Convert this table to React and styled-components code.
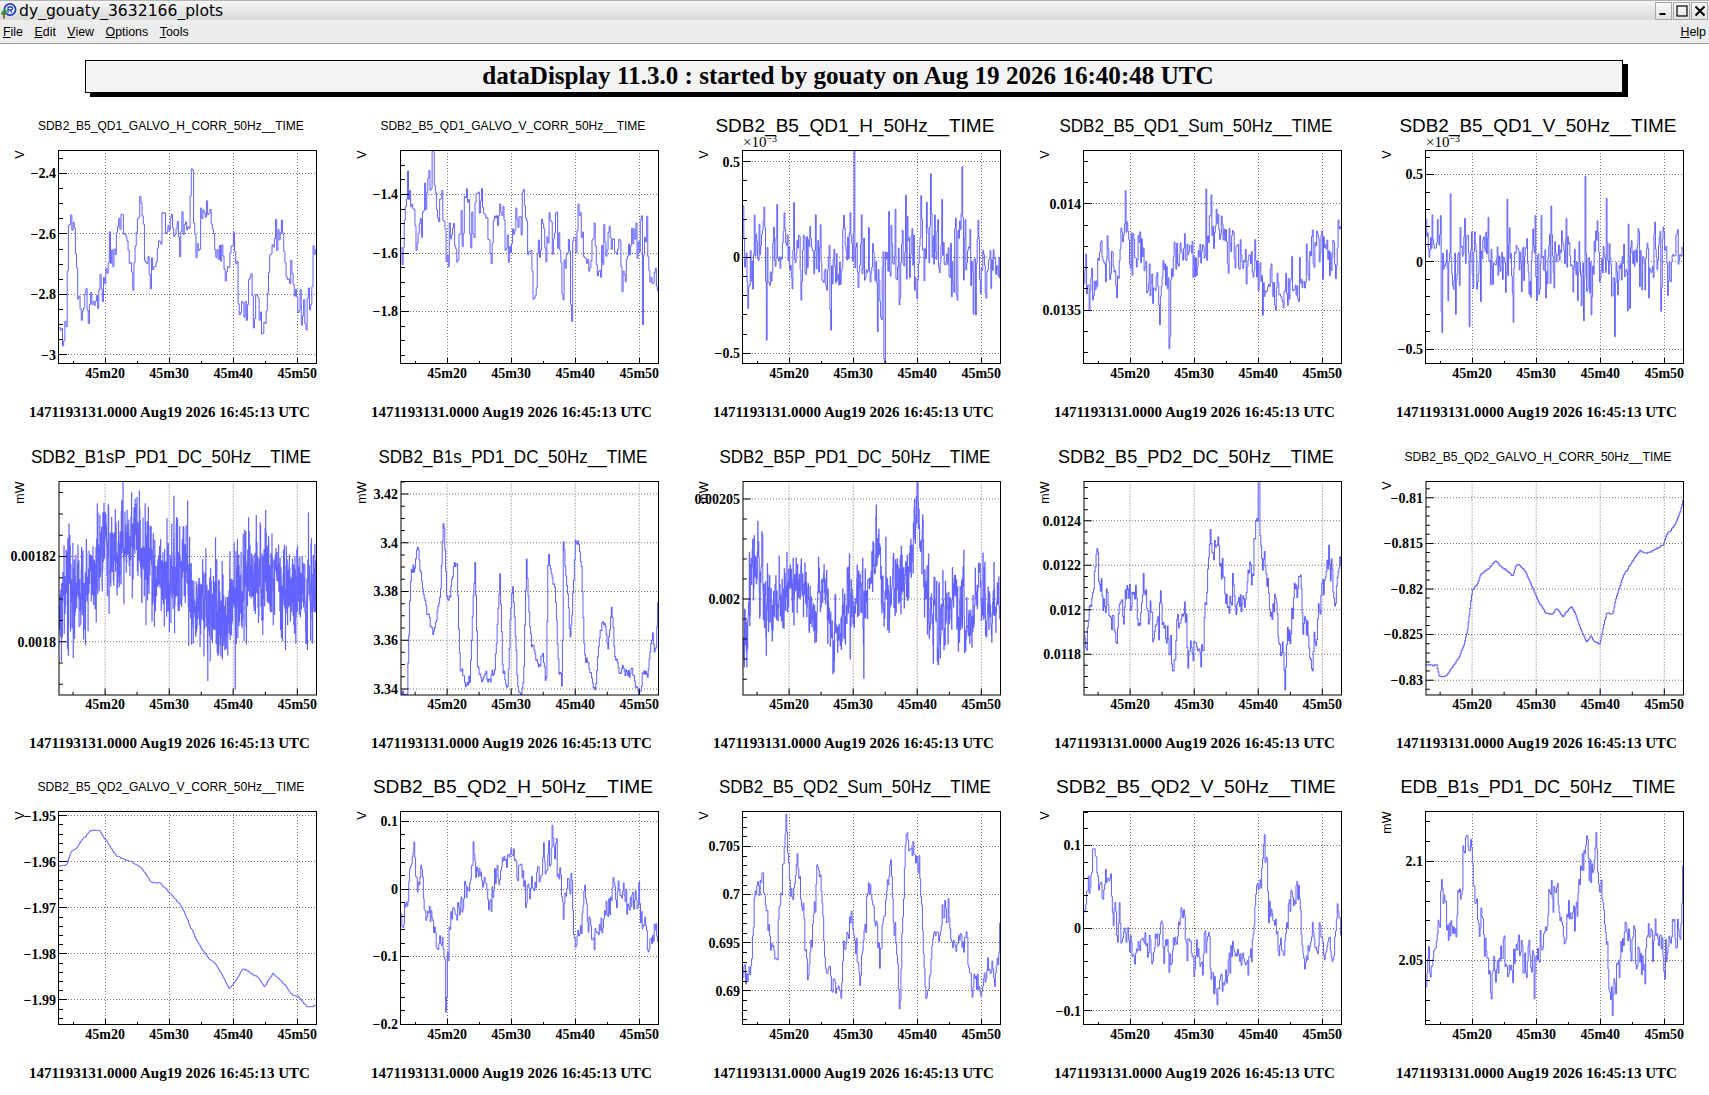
import React, { useMemo } from "react";
import styled, { createGlobalStyle } from "styled-components";

const GlobalStyle = createGlobalStyle`
  html, body {
    margin: 0;
    padding: 0;
    background: #ffffff;
    overflow: hidden;
  }
  #root {
    height: 100vh;
  }
`;

// pad geometry (one pad = 1/5 of the canvas width, 1/3 of the plot area)
const PW = 341.8;
const PH = 330.67;
const FL = 59;
const FR = 316.5;
const FT = 47.5;
const FB = 261;
const T0 = 12.8;
const T1 = 53.0;

const STAMP = "1471193131.0000 Aug19 2026 16:45:13 UTC";

function mulberry32(a) {
  return function () {
    a |= 0;
    a = (a + 0x6d2b79f5) | 0;
    let t = Math.imul(a ^ (a >>> 15), 1 | a);
    t = (t + Math.imul(t ^ (t >>> 7), 61 | t)) ^ t;
    return ((t ^ (t >>> 14)) >>> 0) / 4294967296;
  };
}

function gauss(rng) {
  let u = 0;
  while (u === 0) u = rng();
  const v = rng();
  return Math.sqrt(-2 * Math.log(u)) * Math.cos(2 * Math.PI * v);
}

function interp(keys, t) {
  if (t <= keys[0]) return keys[1];
  for (let i = 0; i < keys.length - 2; i += 2) {
    const ta = keys[i];
    const tb = keys[i + 2];
    if (t >= ta && t <= tb) {
      const f = (t - ta) / (tb - ta);
      return keys[i + 1] + f * (keys[i + 3] - keys[i + 1]);
    }
  }
  return keys[keys.length - 1];
}

function makeSeries({ seed, n, keys, sd, phi = 0.5, spikeRate = 0, spikeAmp = 0, spikes = [] }) {
  const rng = mulberry32(seed);
  const out = [];
  let ar = 0;
  for (let i = 0; i < n; i++) {
    const t = T0 + ((i + 0.5) / n) * (T1 - T0);
    ar = phi * ar + sd * gauss(rng);
    let v = interp(keys, t) + ar;
    if (spikeRate && rng() < spikeRate) {
      v += (rng() < 0.5 ? -1 : 1) * spikeAmp * (0.4 + 0.6 * rng());
    }
    spikes.forEach(([ts, amp, w]) => {
      if (Math.abs(t - ts) < w) v += amp;
    });
    out.push(v);
  }
  return out;
}

const PLOTS = [
  {
    title: "SDB2_B5_QD1_GALVO_H_CORR_50Hz__TIME", small: true, tw: 266, unit: "V",
    ymin: -3.03, ymax: -2.324, majors: [-3, -2.8, -2.6, -2.4], minor: 0.05,
    data: {
      seed: 11, n: 220, sd: 0.035, phi: 0.45,
      keys: [13, -2.87, 14, -2.88, 14.4, -2.52, 15.4, -2.6, 15.8, -2.86, 17, -2.85, 18.5, -2.8, 19.5, -2.78, 20.3, -2.75, 20.6, -2.62, 21.2, -2.72, 21.7, -2.65, 22.2, -2.5, 22.8, -2.56, 23.5, -2.6, 24.3, -2.72, 25, -2.62, 25.7, -2.47, 26.2, -2.72, 27.5, -2.74, 28.3, -2.62, 29.5, -2.58, 30.5, -2.6, 31.5, -2.57, 32.3, -2.52, 33, -2.58, 33.6, -2.43, 34.3, -2.76, 35, -2.55, 35.9, -2.45, 36.8, -2.6, 37.8, -2.68, 39, -2.74, 40.1, -2.64, 40.8, -2.85, 42, -2.86, 42.6, -2.72, 43.3, -2.86, 44.5, -2.9, 45.2, -2.93, 45.8, -2.74, 46.8, -2.66, 47.8, -2.64, 48.6, -2.72, 49.5, -2.7, 50.2, -2.86, 51.5, -2.88, 52.2, -2.83, 52.6, -2.62, 53, -2.6],
    },
  },
  {
    title: "SDB2_B5_QD1_GALVO_V_CORR_50Hz__TIME", small: true, tw: 265, unit: "V",
    ymin: -1.979, ymax: -1.249, majors: [-1.8, -1.6, -1.4], minor: 0.05,
    data: {
      seed: 23, n: 240, sd: 0.05, phi: 0.4,
      spikes: [[39.4, -0.25, 0.12], [50.6, -0.22, 0.12], [17.8, 0.08, 0.2]],
      keys: [13, -1.68, 13.7, -1.45, 14.5, -1.42, 15.5, -1.55, 16.5, -1.42, 17.6, -1.34, 18.4, -1.5, 19.3, -1.44, 20.2, -1.6, 21, -1.52, 22, -1.62, 23, -1.42, 24, -1.55, 24.8, -1.36, 25.8, -1.48, 26.8, -1.6, 27.8, -1.55, 28.8, -1.45, 29.8, -1.58, 30.8, -1.52, 31.8, -1.42, 32.8, -1.58, 33.8, -1.66, 34.8, -1.52, 35.8, -1.58, 36.8, -1.5, 37.8, -1.62, 38.8, -1.55, 39.8, -1.62, 40.8, -1.47, 41.8, -1.6, 42.8, -1.5, 43.8, -1.62, 44.8, -1.55, 45.8, -1.5, 46.8, -1.6, 47.8, -1.68, 48.8, -1.55, 49.8, -1.6, 50.8, -1.65, 51.8, -1.72, 53, -1.7],
    },
  },
  {
    title: "SDB2_B5_QD1_H_50Hz__TIME", tw: 279, unit: "V", exp: "\u22123",
    ymin: -0.556, ymax: 0.559, majors: [-0.5, 0, 0.5], minor: 0.1,
    data: {
      seed: 37, n: 320, sd: 0.1, phi: 0.45, spikeRate: 0.1, spikeAmp: 0.3,
      spikes: [[16.5, -0.32, 0.08], [34.9, -0.38, 0.08], [20.7, 0.38, 0.08], [30.2, 0.34, 0.08], [26.5, -0.3, 0.08]],
      keys: [13, 0, 53, 0],
    },
  },
  {
    title: "SDB2_B5_QD1_Sum_50Hz__TIME", tw: 273, unit: "V",
    ymin: 0.013247, ymax: 0.014251, majors: [0.0135, 0.014], minor: 0.0001,
    data: {
      seed: 41, n: 300, sd: 0.00006, phi: 0.3, spikeRate: 0.06, spikeAmp: 0.00015,
      spikes: [[26.2, -0.0003, 0.08], [31.9, 0.00025, 0.08]],
      keys: [13, 0.013659, 14, 0.013549, 15.4, 0.013753, 16.8, 0.013706, 18.2, 0.013675, 19.2, 0.013895, 20.6, 0.013832, 21.9, 0.013753, 23.3, 0.013643, 25, 0.01358, 26.4, 0.013706, 28.1, 0.013753, 29.8, 0.013737, 31.6, 0.013769, 32.6, 0.013958, 34, 0.013863, 35.7, 0.013769, 37.4, 0.013753, 39.1, 0.01369, 40.8, 0.013643, 42.6, 0.013612, 44.3, 0.01358, 46, 0.013659, 48.1, 0.013706, 49.8, 0.013785, 51.5, 0.013737, 52.9, 0.013832],
    },
  },
  {
    title: "SDB2_B5_QD1_V_50Hz__TIME", tw: 277, unit: "V", exp: "\u22123",
    ymin: -0.584, ymax: 0.638, majors: [-0.5, 0, 0.5], minor: 0.1,
    data: {
      seed: 53, n: 340, sd: 0.09, phi: 0.4, spikeRate: 0.1, spikeAmp: 0.3,
      spikes: [[15.3, -0.42, 0.08], [25.5, 0.42, 0.08], [37.7, 0.47, 0.08], [38.4, -0.4, 0.08]],
      keys: [13, 0.02, 53, 0],
    },
  },
  {
    title: "SDB2_B1sP_PD1_DC_50Hz__TIME", tw: 280, unit: "mW",
    ymin: 0.0017875, ymax: 0.0018376, majors: [0.0018, 0.00182], minor: 0.000005,
    data: {
      seed: 67, n: 1200, sd: 0.0000058, phi: 0.2,
      keys: [13, 0.0018089, 15.7, 0.0018128, 18.4, 0.0018167, 20.5, 0.001823, 23.2, 0.0018222, 25.2, 0.0018238, 27.2, 0.0018167, 29.3, 0.0018136, 32, 0.0018183, 34, 0.0018104, 36.1, 0.0018073, 38.8, 0.0018057, 40.8, 0.0018128, 42.8, 0.0018136, 45.5, 0.0018144, 48.3, 0.0018136, 51, 0.001812, 53, 0.0018104],
    },
  },
  {
    title: "SDB2_B1s_PD1_DC_50Hz__TIME", tw: 269, unit: "mW",
    ymin: 3.33748, ymax: 3.42518, majors: [3.34, 3.36, 3.38, 3.4, 3.42], minor: 0.005,
    data: {
      seed: 71, n: 300, sd: 0.0015, phi: 0.6,
      keys: [13, 3.338, 13.8, 3.34, 14.3, 3.385, 15, 3.39, 15.4, 3.4, 16.2, 3.38, 17, 3.372, 17.8, 3.362, 18.3, 3.368, 19, 3.375, 19.5, 3.413, 20, 3.375, 20.5, 3.378, 21.1, 3.393, 21.6, 3.39, 22, 3.35, 23, 3.34, 23.6, 3.342, 24.4, 3.398, 24.8, 3.35, 25.5, 3.345, 26.5, 3.343, 27.5, 3.345, 28.3, 3.388, 28.7, 3.35, 29.5, 3.34, 30, 3.375, 30.3, 3.383, 31, 3.345, 31.6, 3.338, 32, 3.345, 32.4, 3.395, 33.2, 3.355, 34, 3.35, 35, 3.35, 35.5, 3.34, 35.8, 3.393, 36.8, 3.385, 37.5, 3.35, 38, 3.345, 38.2, 3.403, 39.3, 3.36, 40, 3.398, 40.5, 3.401, 41, 3.39, 41.5, 3.355, 42.5, 3.345, 43.2, 3.338, 44, 3.365, 44.6, 3.37, 45.2, 3.355, 45.7, 3.374, 46.2, 3.355, 47, 3.345, 48, 3.35, 49, 3.345, 50, 3.34, 51, 3.345, 52.1, 3.363, 52.6, 3.355, 53, 3.378],
    },
  },
  {
    title: "SDB2_B5P_PD1_DC_50Hz__TIME", tw: 271, unit: "mW",
    ymin: 0.0019521, ymax: 0.0020587, majors: [0.002, 0.00205], minor: 0.00001,
    data: {
      seed: 83, n: 700, sd: 0.0000105, phi: 0.35,
      spikes: [[40.1, 0.000025, 0.12], [26.9, -0.00003, 0.08], [31.6, -0.00003, 0.08]],
      keys: [13, 0.001981, 14.4, 0.0020125, 15.4, 0.0020142, 16.4, 0.0019975, 17.8, 0.0019942, 19.1, 0.0020058, 20.5, 0.0020008, 22.5, 0.0020075, 24.2, 0.0019908, 25.6, 0.0020092, 26.9, 0.0019775, 28.7, 0.0019942, 30, 0.0020008, 32, 0.0019992, 33.7, 0.0020292, 34.8, 0.0019975, 36.1, 0.0020092, 38.2, 0.0020058, 40.1, 0.0020425, 41.6, 0.0020008, 43.6, 0.0019842, 45.7, 0.0020058, 47.7, 0.0019925, 49.7, 0.0020008, 51.8, 0.0019992, 53, 0.0020092],
    },
  },
  {
    title: "SDB2_B5_PD2_DC_50Hz__TIME", tw: 276, unit: "mW",
    ymin: 0.0116164, ymax: 0.012577, majors: [0.0118, 0.012, 0.0122, 0.0124], minor: 0.00005,
    data: {
      seed: 97, n: 300, sd: 0.00005, phi: 0.6,
      spikes: [[40.1, 0.00025, 0.15]],
      keys: [12.9, 0.011875, 14.3, 0.01213, 15.3, 0.01218, 16.7, 0.01197, 18, 0.01185, 19.4, 0.01206, 20.7, 0.01197, 22.4, 0.01212, 23.5, 0.01191, 24.8, 0.012, 26.5, 0.01173, 27.5, 0.01191, 28.6, 0.01194, 30.6, 0.01176, 32, 0.01197, 32.6, 0.01225, 34, 0.01227, 35, 0.01206, 36.4, 0.01203, 37.7, 0.012, 39.1, 0.01218, 40.1, 0.01235, 40.8, 0.01218, 42.5, 0.01198, 44.2, 0.01178, 45.9, 0.01213, 47.2, 0.012, 48.6, 0.01178, 50, 0.01212, 51, 0.01219, 52, 0.01206, 52.8, 0.01222, 53, 0.0121],
    },
  },
  {
    title: "SDB2_B5_QD2_GALVO_H_CORR_50Hz__TIME", small: true, tw: 267, unit: "V",
    ymin: -0.83162, ymax: -0.80821, majors: [-0.83, -0.825, -0.82, -0.815, -0.81], minor: 0.001,
    data: {
      seed: 101, n: 300, sd: 0.00004, phi: 0.3,
      keys: [13, -0.8283, 14, -0.8284, 14.5, -0.8282, 14.9, -0.8296, 15.6, -0.8297, 16.2, -0.8293, 17, -0.8285, 18, -0.8275, 18.8, -0.826, 19.3, -0.8245, 19.8, -0.8215, 20.1, -0.8201, 20.8, -0.8195, 21.4, -0.8184, 22.5, -0.8178, 23.7, -0.8169, 25, -0.8178, 26.4, -0.8185, 26.9, -0.8174, 27.4, -0.8173, 28.3, -0.818, 29.5, -0.8199, 30.5, -0.8215, 31.6, -0.8227, 32.5, -0.8228, 33.2, -0.8221, 34.2, -0.823, 35.5, -0.8219, 36.2, -0.8228, 37, -0.8245, 37.9, -0.8258, 38.6, -0.8252, 39.2, -0.8258, 40, -0.826, 40.4, -0.8245, 41, -0.8227, 42, -0.8227, 42.5, -0.821, 43.6, -0.8186, 45, -0.817, 46.2, -0.8158, 47, -0.816, 47.8, -0.816, 49, -0.8155, 49.9, -0.8151, 50.4, -0.814, 51, -0.8136, 51.8, -0.8128, 52.5, -0.8115, 53, -0.8101],
    },
  },
  {
    title: "SDB2_B5_QD2_GALVO_V_CORR_50Hz__TIME", small: true, tw: 267, unit: "V",
    ymin: -1.99543, ymax: -1.94907, majors: [-1.99, -1.98, -1.97, -1.96, -1.95], minor: 0.002,
    data: {
      seed: 113, n: 300, sd: 0.00008, phi: 0.3,
      keys: [13, -1.9609, 14, -1.9607, 14.7, -1.9578, 15.7, -1.9568, 16.4, -1.9552, 17.7, -1.9532, 19.1, -1.9532, 20.1, -1.9552, 21.8, -1.9588, 23.8, -1.9599, 25.5, -1.961, 27.2, -1.9643, 28.6, -1.9646, 29.6, -1.9661, 30.6, -1.9675, 32, -1.9697, 33.3, -1.9741, 34.7, -1.978, 36, -1.9806, 37.4, -1.9824, 38.4, -1.9849, 39.4, -1.9875, 40.5, -1.9857, 41.5, -1.9831, 42.8, -1.9842, 43.8, -1.9849, 44.9, -1.9872, 46.2, -1.9842, 47.6, -1.986, 49.3, -1.9889, 50.3, -1.9894, 51.6, -1.9916, 53, -1.9912],
    },
  },
  {
    title: "SDB2_B5_QD2_H_50Hz__TIME", tw: 280, unit: "V",
    ymin: -0.201, ymax: 0.1148, majors: [-0.2, -0.1, 0, 0.1], minor: 0.02,
    data: {
      seed: 127, n: 300, sd: 0.014, phi: 0.5,
      spikes: [[19.9, -0.07, 0.15], [36.5, 0.02, 0.1]],
      keys: [13, -0.06, 13.8, 0, 14.8, 0.07, 15.4, 0.012, 16.8, -0.027, 17.8, -0.047, 19.2, -0.087, 19.9, -0.1, 20.9, -0.022, 22.6, -0.027, 23.9, 0.022, 25.3, 0.022, 26.7, -0.027, 28, 0.032, 29.7, 0.052, 31.4, 0.032, 32.8, -0.017, 34.1, 0.022, 35.5, 0.042, 36.5, 0.065, 38.2, 0, 39.5, 0.007, 40.2, -0.085, 41.6, -0.007, 42.6, -0.067, 44.3, -0.032, 46.3, 0.007, 47.7, -0.012, 49.4, -0.007, 50.4, -0.032, 51.8, -0.067, 52.8, -0.087, 53, -0.09],
    },
  },
  {
    title: "SDB2_B5_QD2_Sum_50Hz__TIME", tw: 272, unit: "V",
    ymin: 0.68647, ymax: 0.70864, majors: [0.69, 0.695, 0.7, 0.705], minor: 0.001,
    data: {
      seed: 131, n: 300, sd: 0.0009, phi: 0.6,
      keys: [13.1, 0.6898, 14.7, 0.6984, 15.7, 0.7019, 17.2, 0.6957, 18.2, 0.6946, 19.5, 0.7064, 20.5, 0.6988, 21.3, 0.7033, 22.9, 0.6915, 24.6, 0.7026, 26, 0.6925, 27.7, 0.6898, 29.8, 0.6984, 31.1, 0.6898, 32.6, 0.703, 34.2, 0.6925, 35.9, 0.7026, 37.3, 0.6901, 38.3, 0.7054, 40.4, 0.7026, 41.4, 0.6898, 42.4, 0.6946, 44.8, 0.6981, 46, 0.696, 48.1, 0.6925, 50.1, 0.6911, 51.7, 0.6925, 52.7, 0.6932, 53, 0.6984],
    },
  },
  {
    title: "SDB2_B5_QD2_V_50Hz__TIME", tw: 280, unit: "V",
    ymin: -0.11693, ymax: 0.1411, majors: [-0.1, 0, 0.1], minor: 0.02,
    data: {
      seed: 139, n: 300, sd: 0.012, phi: 0.5,
      keys: [13.1, 0.022, 14.3, 0.087, 15.7, 0.05, 17.2, 0.042, 18.8, -0.002, 20.3, -0.038, 22.4, -0.014, 24.9, -0.01, 26.5, -0.038, 28.1, 0.006, 30.1, -0.034, 31.7, -0.026, 33.7, -0.071, 35.3, -0.046, 36.8, -0.014, 38.4, -0.054, 40.1, 0.042, 41.2, 0.103, 42.5, -0.01, 44, -0.022, 45.9, 0.071, 47.1, -0.03, 48.7, -0.022, 50, -0.006, 51.4, -0.038, 52.5, 0.03, 53, -0.006],
    },
  },
  {
    title: "EDB_B1s_PD1_DC_50Hz__TIME", tw: 275, unit: "mW",
    ymin: 2.01753, ymax: 2.12525, majors: [2.05, 2.1], minor: 0.01,
    data: {
      seed: 149, n: 300, sd: 0.006, phi: 0.5,
      keys: [13.1, 2.044, 15.7, 2.081, 17.2, 2.06, 18.8, 2.101, 19.8, 2.111, 20.8, 2.076, 22.9, 2.05, 25.4, 2.044, 27.5, 2.057, 29.6, 2.042, 32.6, 2.087, 34.7, 2.06, 38.3, 2.102, 39.8, 2.101, 41.7, 2.03, 43.9, 2.071, 47, 2.047, 48.6, 2.06, 50.1, 2.047, 52.2, 2.069, 53, 2.084],
    },
  },
];

const fmt = (v) => String(v).replace("-", "\u2212");

const Window = styled.div`
  display: flex;
  flex-direction: column;
  height: 100vh;
  background: #ffffff;
`;

const TitleBar = styled.div`
  height: 20px;
  display: flex;
  align-items: center;
  border-top: 1px solid #b4b4b4;
  box-sizing: border-box;
  background: linear-gradient(#f6f6f6, #d9d9d9);
`;

const TitleText = styled.span`
  margin-left: 2px;
  font-family: "DejaVu Sans", sans-serif;
  font-size: 15.6px;
  color: #000;
  line-height: 18px;
`;

const WinButtons = styled.div`
  margin-left: auto;
  display: flex;
  gap: 1px;
  padding-right: 1px;
`;

const WinButton = styled.div`
  width: 17px;
  height: 18px;
  box-sizing: border-box;
  border: 1px solid #a8a8a8;
  background: linear-gradient(#fbfbfb, #e2e2e2);
  display: flex;
  align-items: center;
  justify-content: center;
`;

const MenuBar = styled.div`
  height: 24px;
  box-sizing: border-box;
  display: flex;
  align-items: center;
  gap: 11.5px;
  padding: 0 3px;
  background: #ececec;
  border-bottom: 1px solid #9c9c9c;
  font-family: "Liberation Sans", Arial, sans-serif;
  font-size: 12.4px;
  color: #000;
`;

const MenuItem = styled.span`
  margin-left: ${(p) => (p.$right ? "auto" : "0")};
`;

const Mnemonic = styled.span`
  text-decoration: underline;
  text-underline-offset: 1px;
`;

const Canvas = styled.div`
  flex: 1;
  display: flex;
  flex-direction: column;
  background: #ffffff;
  min-height: 0;
`;

const TitlePave = styled.div`
  margin: 16px 86px 0 85px;
  padding-right: 12px;
  height: 33px;
  box-sizing: border-box;
  border: 1px solid #000;
  background: #f3f3f3;
  box-shadow: 5px 4px 0 #000;
  text-align: center;
  font-family: "Liberation Serif", "Times New Roman", serif;
  font-weight: bold;
  font-size: 25.1px;
  line-height: 30px;
  color: #000;
  white-space: nowrap;
`;

const PlotGrid = styled.div`
  flex: 1;
  margin-top: 10px;
  display: grid;
  grid-template-columns: repeat(5, 1fr);
  grid-template-rows: repeat(3, 1fr);
  min-height: 0;
`;

const Pad = styled.div`
  position: relative;
  min-width: 0;
  min-height: 0;
`;

const PlotSvg = styled.svg`
  display: block;
  width: 100%;
  height: 100%;
`;

const PlotTitle = styled.text`
  font-family: "Liberation Sans", Arial, sans-serif;
  font-size: ${(p) => (p.$small ? "12px" : "19px")};
  fill: #000;
`;

const AxisLabel = styled.text`
  font-family: "Liberation Serif", "Times New Roman", serif;
  font-weight: bold;
  font-size: 14px;
  fill: #000;
`;

const Multiplier = styled.text`
  font-family: "Liberation Serif", "Times New Roman", serif;
  font-size: 15px;
  fill: #000;
`;

const AxisTitle = styled.text`
  font-family: "Liberation Sans", Arial, sans-serif;
  font-size: 12.5px;
  fill: #000;
`;

const Stamp = styled.text`
  font-family: "Liberation Serif", "Times New Roman", serif;
  font-weight: bold;
  font-size: 15px;
  fill: #000;
`;

const GridLines = styled.path`
  fill: none;
  stroke: #707070;
  stroke-width: 1;
  stroke-dasharray: 1 2;
  shape-rendering: crispEdges;
`;

const Ticks = styled.path`
  fill: none;
  stroke: #000;
  stroke-width: 1;
  shape-rendering: crispEdges;
`;

const DataLine = styled.path`
  fill: none;
  stroke: #6262ff;
  stroke-width: 1;
`;

const Frame = styled.rect`
  fill: none;
  stroke: #000;
  stroke-width: 1;
  shape-rendering: crispEdges;
`;

function RootIcon() {
  return (
    <svg width="17" height="17" viewBox="0 0 17 17">
      <circle cx="10" cy="7.5" r="5.6" fill="#ffffff" stroke="#1d39b8" strokeWidth="1.7" />
      <path d="M8 4.5v6M8 5h3.2a1.4 1.4 0 0 1 0 2.8H8M10 7.8l2 2.6" stroke="#1d39b8" strokeWidth="1.3" fill="none" />
      <path d="M0.8 12.5c0.5-3.6 3-5.2 6.2-4.6c-0.3 3-2.6 4.9-6.2 4.6z" fill="#2f9b2f" />
      <path d="M2.2 12.2c1.5 0.5 3.6 0.1 4.6-1.4" stroke="#1c6b1c" strokeWidth="0.8" fill="none" />
      <rect x="3.2" y="12.2" width="1.6" height="4.3" fill="#7b4a17" />
    </svg>
  );
}

function TimePlot({ cfg, idx }) {
  const { ymin, ymax, majors, minor } = cfg;
  const values = useMemo(() => makeSeries(cfg.data), [cfg]);
  const sx = (t) => FL + ((t - T0) / (T1 - T0)) * (FR - FL);
  const sy = (v) => FB - ((v - ymin) / (ymax - ymin)) * (FB - FT);

  const n = values.length;
  let line = "";
  values.forEach((v, i) => {
    const x0 = FL + (i / n) * (FR - FL);
    const x1 = FL + ((i + 1) / n) * (FR - FL);
    const y = sy(v).toFixed(2);
    line += i === 0 ? `M${x0.toFixed(2)} ${y}` : `V${y}`;
    line += `H${x1.toFixed(2)}`;
  });

  const xMajor = [20, 30, 40, 50];
  const xMinor = [15, 25, 35, 45];
  const yMinor = [];
  const k0 = Math.ceil(ymin / minor - 1e-6);
  const k1 = Math.floor(ymax / minor + 1e-6);
  for (let k = k0; k <= k1; k++) yMinor.push(k * minor);

  let grid = "";
  xMajor.forEach((t) => (grid += `M${sx(t).toFixed(1)} ${FT}V${FB}`));
  majors.forEach((v) => (grid += `M${FL} ${sy(v).toFixed(1)}H${FR}`));

  let ticks = "";
  xMajor.forEach((t) => (ticks += `M${sx(t).toFixed(1)} ${FB}v-6.4`));
  xMinor.forEach((t) => (ticks += `M${sx(t).toFixed(1)} ${FB}v-3.2`));
  majors.forEach((v) => (ticks += `M${FL} ${sy(v).toFixed(1)}h7.7`));
  yMinor.forEach((v) => (ticks += `M${FL} ${sy(v).toFixed(1)}h3.9`));

  const clipId = `frame-clip-${idx}`;

  return (
    <PlotSvg viewBox={`0 0 ${PW} ${PH}`} preserveAspectRatio="none">
      <defs>
        <clipPath id={clipId}>
          <rect x={FL} y={FT} width={FR - FL} height={FB - FT} />
        </clipPath>
      </defs>
      <PlotTitle
        $small={cfg.small}
        x={PW / 2}
        y={cfg.small ? 27.5 : 29}
        textAnchor="middle"
        textLength={cfg.tw}
        lengthAdjust="spacingAndGlyphs"
      >
        {cfg.title}
      </PlotTitle>
      <GridLines d={grid} />
      <DataLine d={line} clipPath={`url(#${clipId})`} />
      <Ticks d={ticks} />
      <Frame x={FL} y={FT} width={FR - FL} height={FB - FT} />
      {majors.map((v) => (
        <AxisLabel key={v} x={FL - 3} y={sy(v) + 4.8} textAnchor="end">
          {fmt(v)}
        </AxisLabel>
      ))}
      {xMajor.map((t) => (
        <AxisLabel key={t} x={sx(t)} y={FB + 14.5} textAnchor="middle">
          {`45m${t}`}
        </AxisLabel>
      ))}
      {cfg.exp && (
        <Multiplier x={FL} y={FT - 3}>
          ×10
          <tspan dy="-5" fontSize="10">
            {cfg.exp}
          </tspan>
        </Multiplier>
      )}
      <AxisTitle transform={`translate(24 ${FT}) rotate(-90)`} textAnchor="end">
        {cfg.unit}
      </AxisTitle>
      <Stamp x={PW / 2 - 1.5} y={314.5} textAnchor="middle" textLength={281} lengthAdjust="spacingAndGlyphs">
        {STAMP}
      </Stamp>
    </PlotSvg>
  );
}

export default function App() {
  return (
    <Window>
      <GlobalStyle />
      <TitleBar>
        <RootIcon />
        <TitleText>dy_gouaty_3632166_plots</TitleText>
        <WinButtons>
          <WinButton>
            <svg width="11" height="11" viewBox="0 0 11 11">
              <rect x="1.5" y="8" width="6" height="2" fill="#000" />
            </svg>
          </WinButton>
          <WinButton>
            <svg width="12" height="12" viewBox="0 0 12 12">
              <rect x="1" y="1" width="10" height="10" fill="none" stroke="#000" strokeWidth="1.2" />
            </svg>
          </WinButton>
          <WinButton>
            <svg width="12" height="12" viewBox="0 0 12 12">
              <path d="M1.5 1.5L10.5 10.5M10.5 1.5L1.5 10.5" stroke="#000" strokeWidth="2" />
            </svg>
          </WinButton>
        </WinButtons>
      </TitleBar>
      <MenuBar>
        <MenuItem>
          <Mnemonic>F</Mnemonic>ile
        </MenuItem>
        <MenuItem>
          <Mnemonic>E</Mnemonic>dit
        </MenuItem>
        <MenuItem>
          <Mnemonic>V</Mnemonic>iew
        </MenuItem>
        <MenuItem>
          <Mnemonic>O</Mnemonic>ptions
        </MenuItem>
        <MenuItem>
          <Mnemonic>T</Mnemonic>ools
        </MenuItem>
        <MenuItem $right>
          <Mnemonic>H</Mnemonic>elp
        </MenuItem>
      </MenuBar>
      <Canvas>
        <TitlePave>dataDisplay 11.3.0 : started by gouaty on Aug 19 2026 16:40:48 UTC</TitlePave>
        <PlotGrid>
          {PLOTS.map((cfg, i) => (
            <Pad key={cfg.title}>
              <TimePlot cfg={cfg} idx={i} />
            </Pad>
          ))}
        </PlotGrid>
      </Canvas>
    </Window>
  );
}
